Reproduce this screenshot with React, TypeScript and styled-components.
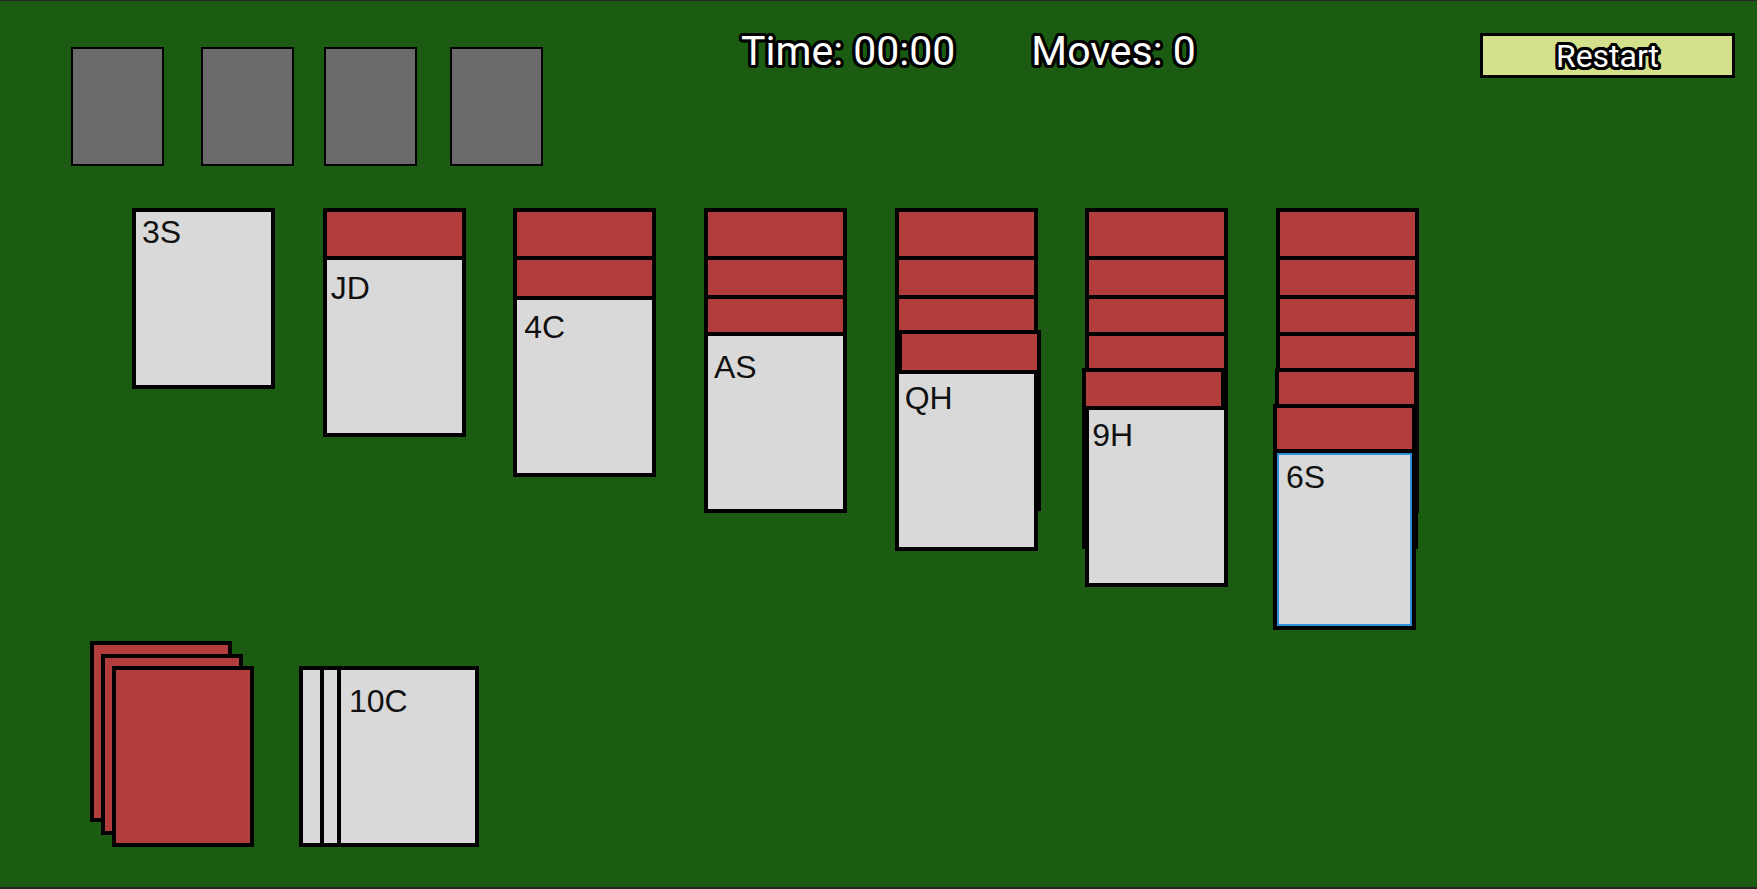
import styled, { createGlobalStyle, css } from "styled-components";

const GlobalStyle = createGlobalStyle`
  html, body {
    margin: 0;
    padding: 0;
    background: #262626;
  }
  body {
    font-family: Roboto, "Liberation Sans", sans-serif;
  }
`;

const CARD_W = 143;
const CARD_H = 181;

const Board = styled.main`
  margin-top: 1px;
  height: 886px;
  background: #1b5b12;
  overflow: hidden;
`;

const TopRow = styled.header`
  display: flex;
  align-items: flex-start;
  height: 165px;
`;

const Foundations = styled.div`
  display: flex;
  margin: 46px 0 0 71px;
`;

const Slot = styled.div<{ $gap: number }>`
  width: 93px;
  height: 119px;
  box-sizing: border-box;
  margin-right: ${(p) => p.$gap}px;
  background: #6b6b6b;
  border: 2px solid #000;
`;

// thick black outline around white text
const outline = css`
  color: #fff;
  text-shadow: 3px 0 0 #000, -3px 0 0 #000, 0 3px 0 #000, 0 -3px 0 #000,
    2px 2px 0 #000, -2px 2px 0 #000, 2px -2px 0 #000, -2px -2px 0 #000,
    3px 1.5px 0 #000, -3px 1.5px 0 #000, 3px -1.5px 0 #000, -3px -1.5px 0 #000,
    1.5px 3px 0 #000, -1.5px 3px 0 #000, 1.5px -3px 0 #000, -1.5px -3px 0 #000;
`;

const Stats = styled.div`
  display: flex;
  gap: 76px;
  margin: 26px 0 0 198px;
  font-size: 41px;
  ${outline};
`;

const Stat = styled.span`
  white-space: nowrap;
`;

const RestartButton = styled.button`
  margin: 32px 22px 0 auto;
  width: 255px;
  height: 45px;
  box-sizing: border-box;
  border: 3px solid #000;
  border-radius: 0;
  background: #d4e08b;
  font-family: Roboto, sans-serif;
  font-size: 32px;
  line-height: 1;
  padding: 0;
  ${outline};
`;

const Tableau = styled.section`
  display: flex;
  align-items: flex-start;
  gap: 47.67px;
  margin-top: 42px;
  padding-left: 132px;
`;

const Column = styled.div`
  display: flex;
  flex-direction: column;
  width: ${CARD_W}px;
`;

const Card = styled.div<{
  $face?: boolean;
  $lift?: number;
  $dx?: number;
  $selected?: boolean;
  $w?: number;
}>`
  position: relative;
  flex: none;
  width: ${(p) => p.$w ?? CARD_W}px;
  height: ${CARD_H}px;
  box-sizing: border-box;
  border: 4px solid #000;
  margin-top: ${(p) => p.$lift ?? 0}px;
  margin-left: ${(p) => p.$dx ?? 0}px;
  background: ${(p) => (p.$face ? "#d9d9d9" : "#b33d3d")};
  ${(p) =>
    p.$selected &&
    css`
      box-shadow: inset 0 0 0 2px #2f8fdc;
    `}
`;

const Label = styled.span<{ $top: number; $left: number }>`
  display: block;
  padding: ${(p) => p.$top}px 0 0 ${(p) => p.$left}px;
  font-family: "Liberation Sans", Arial, sans-serif;
  font-size: 32px;
  color: #111;
`;

const BottomRow = styled.section`
  display: flex;
  align-items: flex-start;
  margin-top: 11px;
  padding-left: 90px;
  gap: 45px;
`;

const Stock = styled.div`
  display: flex;
  flex-direction: column;
`;

const Waste = styled.div`
  display: flex;
  margin-top: 25px;
`;

type CardData = {
  top: number;
  dx?: number;
  label?: string;
  pad?: [number, number];
  selected?: boolean;
};

const columns: CardData[][] = [
  [{ top: 0, label: "3S", pad: [2, 6] }],
  [{ top: 0 }, { top: 48, label: "JD", pad: [10, 4] }],
  [{ top: 0 }, { top: 48 }, { top: 88, label: "4C", pad: [9, 7] }],
  [{ top: 0 }, { top: 48 }, { top: 87 }, { top: 124, label: "AS", pad: [13, 6] }],
  [
    { top: 0 },
    { top: 48 },
    { top: 87 },
    { top: 122, dx: 3 },
    { top: 162, label: "QH", pad: [6, 6] },
  ],
  [
    { top: 0 },
    { top: 48 },
    { top: 87 },
    { top: 124 },
    { top: 160, dx: -3 },
    { top: 198, label: "9H", pad: [7, 3] },
  ],
  [
    { top: 0 },
    { top: 48 },
    { top: 87 },
    { top: 124 },
    { top: 160, dx: -1 },
    { top: 196, dx: -3 },
    { top: 241, dx: -3, label: "6S", pad: [6, 9], selected: true },
  ],
];

const slotGaps = [37, 30, 33, 0];
const stockShift = [0, 12.5, 12.5];
const wasteLefts = [0, 21, 17];

export default function App() {
  return (
    <>
      <GlobalStyle />
      <Board>
        <TopRow>
          <Foundations>
            {slotGaps.map((g, i) => (
              <Slot key={i} $gap={g} />
            ))}
          </Foundations>
          <Stats>
            <Stat>Time: 00:00</Stat>
            <Stat>Moves: 0</Stat>
          </Stats>
          <RestartButton>Restart</RestartButton>
        </TopRow>

        <Tableau>
          {columns.map((col, ci) => (
            <Column key={ci}>
              {col.map((c, i) => (
                <Card
                  key={i}
                  $face={!!c.label}
                  $lift={i === 0 ? 0 : c.top - col[i - 1].top - CARD_H}
                  $dx={c.dx ?? 0}
                  $selected={c.selected}
                >
                  {c.label && c.pad && (
                    <Label $top={c.pad[0]} $left={c.pad[1]}>
                      {c.label}
                    </Label>
                  )}
                </Card>
              ))}
            </Column>
          ))}
        </Tableau>

        <BottomRow>
          <Stock>
            {stockShift.map((s, i) => (
              <Card
                key={i}
                $w={142}
                $lift={i === 0 ? 0 : s - CARD_H}
                $dx={i * 11}
              />
            ))}
          </Stock>
          <Waste>
            {wasteLefts.map((l, i) => (
              <Card key={i} $face $w={142} $dx={i === 0 ? 0 : l - 142}>
                {i === 2 && (
                  <Label $top={13} $left={8}>
                    10C
                  </Label>
                )}
              </Card>
            ))}
          </Waste>
        </BottomRow>
      </Board>
    </>
  );
}
